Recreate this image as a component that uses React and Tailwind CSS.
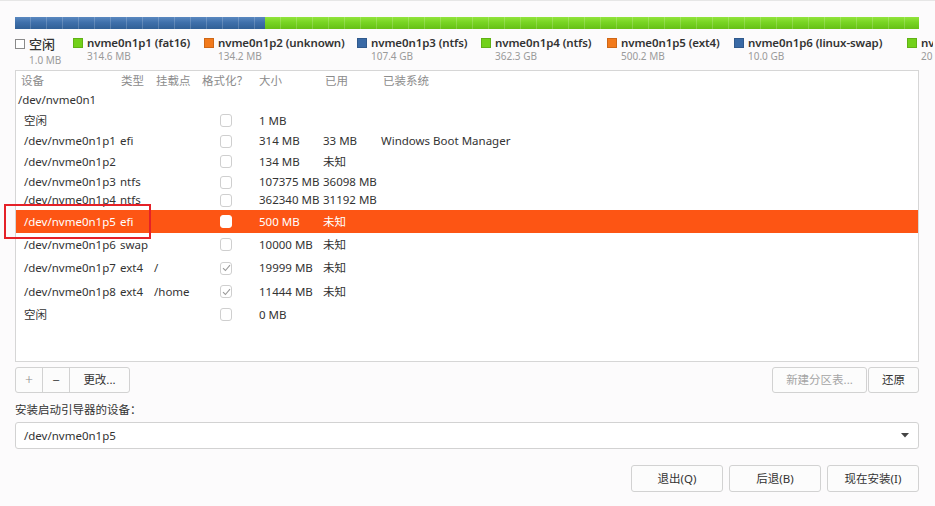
import React from "react";

const legend = [
  { name: "空闲", size: "1.0 MB", color: "free", w: 58 },
  { name: "nvme0n1p1 (fat16)", size: "314.6 MB", color: "bg-[#72d11a]", w: 131 },
  { name: "nvme0n1p2 (unknown)", size: "134.2 MB", color: "bg-[#f27a1c]", w: 153 },
  { name: "nvme0n1p3 (ntfs)", size: "107.4 GB", color: "bg-[#3a6aa6]", w: 124 },
  { name: "nvme0n1p4 (ntfs)", size: "362.3 GB", color: "bg-[#72d11a]", w: 126 },
  { name: "nvme0n1p5 (ext4)", size: "500.2 MB", color: "bg-[#f27a1c]", w: 127 },
  { name: "nvme0n1p6 (linux-swap)", size: "10.0 GB", color: "bg-[#3a6aa6]", w: 173 },
  { name: "nvme0n1p7 (ext4)", size: "20.0 GB", color: "bg-[#72d11a]", w: 120 },
];

const rows = [
  { dev: "空闲", type: "", mount: "", checked: false, size: "1 MB", used: "", sys: "", h: "h-[21px]" },
  { dev: "/dev/nvme0n1p1", type: "efi", mount: "", checked: false, size: "314 MB", used: "33 MB", sys: "Windows Boot Manager", h: "h-[20px]" },
  { dev: "/dev/nvme0n1p2", type: "", mount: "", checked: false, size: "134 MB", used: "未知", sys: "", h: "h-[21px]" },
  { dev: "/dev/nvme0n1p3", type: "ntfs", mount: "", checked: false, size: "107375 MB", used: "36098 MB", sys: "", h: "h-[20px]" },
  { dev: "/dev/nvme0n1p4", type: "ntfs", mount: "", checked: false, size: "362340 MB", used: "31192 MB", sys: "", h: "h-[18px]", squeeze: true },
  { dev: "/dev/nvme0n1p5", type: "efi", mount: "", checked: false, size: "500 MB", used: "未知", sys: "", h: "h-[23px]", sel: true },
  { dev: "/dev/nvme0n1p6", type: "swap", mount: "", checked: false, size: "10000 MB", used: "未知", sys: "", h: "h-[23px]" },
  { dev: "/dev/nvme0n1p7", type: "ext4", mount: "/", checked: true, size: "19999 MB", used: "未知", sys: "", h: "h-[24px]" },
  { dev: "/dev/nvme0n1p8", type: "ext4", mount: "/home", checked: true, size: "11444 MB", used: "未知", sys: "", h: "h-[23px]" },
  { dev: "空闲", type: "", mount: "", checked: false, size: "0 MB", used: "", sys: "", h: "h-[23px]" },
];

function Check({ checked, sel }) {
  if (sel) {
    return <div className="w-[12px] h-[13px] rounded-[3px] bg-white border border-white" />;
  }
  return (
    <div className="w-[12px] h-[13px] rounded-[3px] bg-white border border-[#cfcfcf] flex items-center justify-center">
      {checked && (
        <svg width="9" height="8" viewBox="0 0 9 8">
          <path d="M1 4.2 L3.4 6.5 L8 1.2" fill="none" stroke="#9a9a9a" strokeWidth="1.1" />
        </svg>
      )}
    </div>
  );
}

function Row({ r }) {
  const txt = r.sel ? "text-white" : "text-[#333]";
  return (
    <div className={`relative flex items-center ${r.h} ${r.sel ? "bg-[#fd5514]" : ""} ${txt} ${r.squeeze ? "overflow-hidden" : ""}`}>
      <div className={`flex items-center w-full pl-[8px] ${r.squeeze ? "-translate-y-[1px]" : ""}`}>
        <div className="w-[96px] shrink-0 whitespace-nowrap">{r.dev}</div>
        <div className="w-[34px] shrink-0">{r.type}</div>
        <div className="w-[66px] shrink-0">{r.mount}</div>
        <div className="w-[39px] shrink-0"><Check checked={r.checked} sel={r.sel} /></div>
        <div className="w-[64px] shrink-0 whitespace-nowrap">{r.size}</div>
        <div className="w-[58px] shrink-0 whitespace-nowrap">{r.used}</div>
        <div className="whitespace-nowrap">{r.sys}</div>
      </div>
    </div>
  );
}

function Btn({ children, className = "" }) {
  return (
    <div className={`h-[26px] flex items-center justify-center border border-[#d2d2d2] rounded-[3px] bg-[#fcfcfc] text-[#333] ${className}`}>
      {children}
    </div>
  );
}

export default function App() {
  return (
    <div className="relative w-[935px] h-[506px] overflow-hidden bg-[#fcfbfc] text-[11.5px] leading-none font-['Noto_Sans','Noto_Sans_CJK_SC',sans-serif] border-t border-[#e6e6e6]">
      <div className="px-[15px] pr-[16px] pt-[16px] flex flex-col">
        {/* usage bar */}
        <div className="h-[12px] flex overflow-hidden">
          <div className="w-[250px] h-full bg-[linear-gradient(180deg,#5a88c0_0%,#3f70ab_45%,#305f96_100%)] relative">
            <div className="absolute inset-0 bg-[repeating-linear-gradient(90deg,transparent_0px,transparent_15px,rgba(255,255,255,0.18)_15px,rgba(255,255,255,0.18)_16px)]" />
          </div>
          <div className="flex-1 h-full bg-[linear-gradient(180deg,#92e43c_0%,#78d423_45%,#66c015_100%)] relative">
            <div className="absolute inset-0 bg-[repeating-linear-gradient(90deg,transparent_0px,transparent_15px,rgba(255,255,255,0.18)_15px,rgba(255,255,255,0.18)_16px)]" />
          </div>
        </div>

        {/* legend */}
        <div className="flex h-[41px] overflow-hidden pt-[8px] mr-[-14px]">
          {legend.map((l, i) => (
            <div key={i} className="flex shrink-0" style={{ width: l.w }}>
              {l.color === "free" ? (
                <div className="w-[10px] h-[10px] mt-[2px] border border-[#8a8a8a] bg-white shrink-0" />
              ) : (
                <div className={`w-[10px] h-[10px] mt-[1px] shrink-0 border border-black/15 ${l.color}`} />
              )}
              <div className="ml-[4px] flex flex-col">
                {l.color === "free" ? (
                  <>
                    <div className="text-[13px] text-[#333] font-medium whitespace-nowrap mt-[1px]">{l.name}</div>
                    <div className="text-[10px] text-[#9a9a9a] whitespace-nowrap mt-[4px]">{l.size}</div>
                  </>
                ) : (
                  <>
                    <div className="text-[11.5px] text-[#333] font-semibold whitespace-nowrap tracking-[-0.1px]">{l.name}</div>
                    <div className="text-[10px] text-[#9a9a9a] whitespace-nowrap mt-[2px]">{l.size}</div>
                  </>
                )}
              </div>
            </div>
          ))}
        </div>

        {/* table */}
        <div className="h-[292px] border border-[#d6d6d6] bg-white">
          <div className="h-[19px] flex items-center pl-[5px] text-[#8c8c8c]">
            <div className="w-[100px] shrink-0">设备</div>
            <div className="w-[35px] shrink-0">类型</div>
            <div className="w-[46px] shrink-0">挂载点</div>
            <div className="w-[57px] shrink-0 whitespace-nowrap">格式化<span className="font-['Noto_Sans_CJK_SC',sans-serif]">？</span></div>
            <div className="w-[66px] shrink-0">大小</div>
            <div className="w-[58px] shrink-0">已用</div>
            <div>已装系统</div>
          </div>
          <div className="h-[20px] flex items-center pl-[2px] text-[#333]">/dev/nvme0n1</div>
          {rows.map((r, i) => (
            <Row key={i} r={r} />
          ))}
        </div>

        {/* toolbar */}
        <div className="flex justify-between mt-[5px]">
          <div className="flex h-[26px] border border-[#d2d2d2] rounded-[3px] bg-[#fcfcfc] text-[#333] overflow-hidden">
            <div className="w-[27px] flex items-center justify-center border-r border-[#d2d2d2] text-[#8a8a8a] text-[14px] font-light">+</div>
            <div className="w-[27px] flex items-center justify-center border-r border-[#d2d2d2] text-[#555] text-[13px]">−</div>
            <div className="w-[59px] flex items-center justify-center">更改...</div>
          </div>
          <div className="flex gap-[1px]">
            <Btn className="w-[95px]"><span className="text-[#a5a5a5]">新建分区表...</span></Btn>
            <Btn className="w-[51px]">还原</Btn>
          </div>
        </div>

        <div className="mt-[11px] h-[12px] text-[#333] whitespace-nowrap">安装启动引导器的设备：</div>

        <div className="mt-[6px] h-[27px] border border-[#d2d2d2] rounded-[3px] bg-white flex items-center justify-between pl-[8px] pr-[9px] text-[#333]">
          <span>/dev/nvme0n1p5</span>
          <svg width="8" height="5" viewBox="0 0 8 5"><path d="M0 0 H8 L4 4.5 Z" fill="#444" /></svg>
        </div>

        <div className="flex justify-end gap-[6px] mt-[16px]">
          <Btn className="w-[92px] h-[27px]">退出(Q)</Btn>
          <Btn className="w-[92px] h-[27px]">后退(B)</Btn>
          <Btn className="w-[92px] h-[27px]">现在安装(I)</Btn>
        </div>
      </div>

      {/* red annotation box */}
      <div className="absolute left-[4px] top-[203px] w-[147px] h-[35px] border-2 border-[#e52128] pointer-events-none" />
    </div>
  );
}
